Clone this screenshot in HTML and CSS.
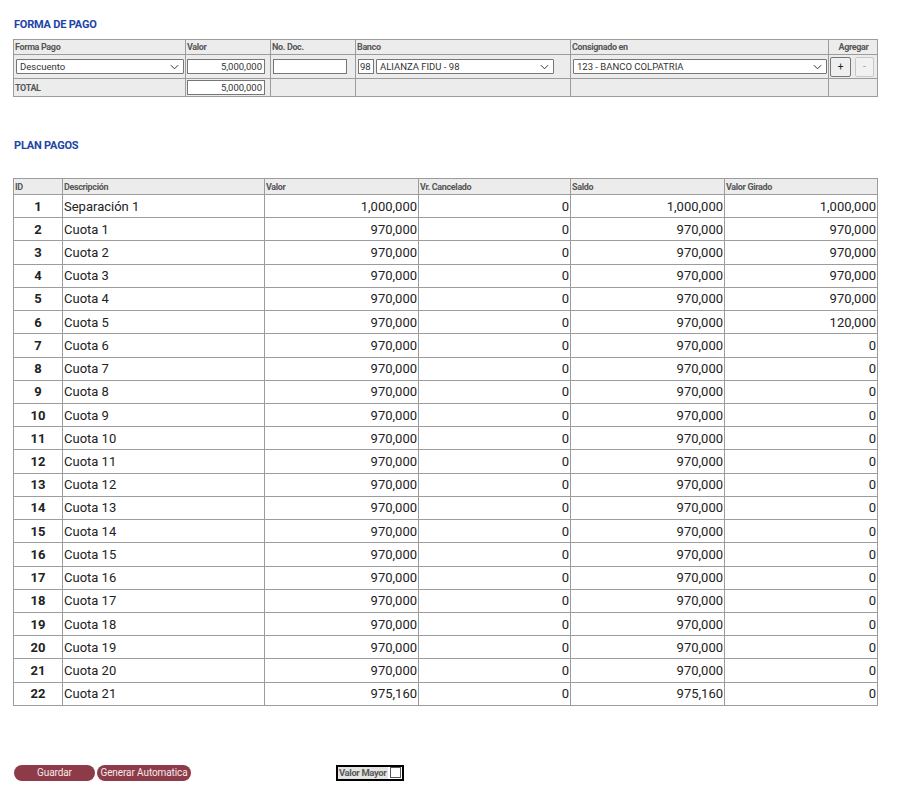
FILE: index.html
```html
<!DOCTYPE html>
<html lang="es">
<head>
<meta charset="utf-8">
<title>Forma de pago</title>
<link rel="stylesheet" href="styles.css">
</head>
<body>
<div class="page">
  <h2 class="title t1">FORMA DE PAGO</h2>
  <table class="pago">
    <colgroup>
      <col style="width:172px"><col style="width:85px"><col style="width:85px"><col style="width:215px"><col style="width:258px"><col style="width:49px">
    </colgroup>
    <tr class="hd">
      <th>Forma Pago</th><th>Valor</th><th>No. Doc.</th><th>Banco</th><th>Consignado en</th><th class="c">Agregar</th>
    </tr>
    <tr class="inrow">
      <td><div class="sel w-forma"><span>Descuento</span><svg viewBox="0 0 10 6" class="chev"><path d="M1 1 L5 5 L9 1" fill="none" stroke="#333" stroke-width="1.1"/></svg></div></td>
      <td><div class="inp num w-valor">5,000,000</div></td>
      <td><div class="inp w-doc"></div></td>
      <td><div class="banco"><div class="inp w-cod">98</div><div class="sel w-banco"><span>ALIANZA FIDU - 98</span><svg viewBox="0 0 10 6" class="chev"><path d="M1 1 L5 5 L9 1" fill="none" stroke="#333" stroke-width="1.1"/></svg></div></div></td>
      <td><div class="sel w-cons"><span>123 - BANCO COLPATRIA</span><svg viewBox="0 0 10 6" class="chev"><path d="M1 1 L5 5 L9 1" fill="none" stroke="#333" stroke-width="1.1"/></svg></div></td>
      <td><div class="btns"><span class="pm">+</span><span class="pm dis">-</span></div></td>
    </tr>
    <tr class="tot">
      <th>TOTAL</th>
      <td><div class="inp num w-valor">5,000,000</div></td>
      <td></td><td></td><td></td><td></td>
    </tr>
  </table>

  <h2 class="title t2">PLAN PAGOS</h2>
  <table class="plan">
    <colgroup>
      <col style="width:49px"><col style="width:202px"><col style="width:154px"><col style="width:152px"><col style="width:154px"><col style="width:153px">
    </colgroup>
    <thead>
      <tr><th>ID</th><th>Descripción</th><th>Valor</th><th>Vr. Cancelado</th><th>Saldo</th><th>Valor Girado</th></tr>
    </thead>
    <tbody>
      <tr><td class="id">1</td><td>Separación 1</td><td class="n">1,000,000</td><td class="n">0</td><td class="n">1,000,000</td><td class="n">1,000,000</td></tr>
      <tr><td class="id">2</td><td>Cuota 1</td><td class="n">970,000</td><td class="n">0</td><td class="n">970,000</td><td class="n">970,000</td></tr>
      <tr><td class="id">3</td><td>Cuota 2</td><td class="n">970,000</td><td class="n">0</td><td class="n">970,000</td><td class="n">970,000</td></tr>
      <tr><td class="id">4</td><td>Cuota 3</td><td class="n">970,000</td><td class="n">0</td><td class="n">970,000</td><td class="n">970,000</td></tr>
      <tr><td class="id">5</td><td>Cuota 4</td><td class="n">970,000</td><td class="n">0</td><td class="n">970,000</td><td class="n">970,000</td></tr>
      <tr><td class="id">6</td><td>Cuota 5</td><td class="n">970,000</td><td class="n">0</td><td class="n">970,000</td><td class="n">120,000</td></tr>
      <tr><td class="id">7</td><td>Cuota 6</td><td class="n">970,000</td><td class="n">0</td><td class="n">970,000</td><td class="n">0</td></tr>
      <tr><td class="id">8</td><td>Cuota 7</td><td class="n">970,000</td><td class="n">0</td><td class="n">970,000</td><td class="n">0</td></tr>
      <tr><td class="id">9</td><td>Cuota 8</td><td class="n">970,000</td><td class="n">0</td><td class="n">970,000</td><td class="n">0</td></tr>
      <tr><td class="id">10</td><td>Cuota 9</td><td class="n">970,000</td><td class="n">0</td><td class="n">970,000</td><td class="n">0</td></tr>
      <tr><td class="id">11</td><td>Cuota 10</td><td class="n">970,000</td><td class="n">0</td><td class="n">970,000</td><td class="n">0</td></tr>
      <tr><td class="id">12</td><td>Cuota 11</td><td class="n">970,000</td><td class="n">0</td><td class="n">970,000</td><td class="n">0</td></tr>
      <tr><td class="id">13</td><td>Cuota 12</td><td class="n">970,000</td><td class="n">0</td><td class="n">970,000</td><td class="n">0</td></tr>
      <tr><td class="id">14</td><td>Cuota 13</td><td class="n">970,000</td><td class="n">0</td><td class="n">970,000</td><td class="n">0</td></tr>
      <tr><td class="id">15</td><td>Cuota 14</td><td class="n">970,000</td><td class="n">0</td><td class="n">970,000</td><td class="n">0</td></tr>
      <tr><td class="id">16</td><td>Cuota 15</td><td class="n">970,000</td><td class="n">0</td><td class="n">970,000</td><td class="n">0</td></tr>
      <tr><td class="id">17</td><td>Cuota 16</td><td class="n">970,000</td><td class="n">0</td><td class="n">970,000</td><td class="n">0</td></tr>
      <tr><td class="id">18</td><td>Cuota 17</td><td class="n">970,000</td><td class="n">0</td><td class="n">970,000</td><td class="n">0</td></tr>
      <tr><td class="id">19</td><td>Cuota 18</td><td class="n">970,000</td><td class="n">0</td><td class="n">970,000</td><td class="n">0</td></tr>
      <tr><td class="id">20</td><td>Cuota 19</td><td class="n">970,000</td><td class="n">0</td><td class="n">970,000</td><td class="n">0</td></tr>
      <tr><td class="id">21</td><td>Cuota 20</td><td class="n">970,000</td><td class="n">0</td><td class="n">970,000</td><td class="n">0</td></tr>
      <tr><td class="id">22</td><td>Cuota 21</td><td class="n">975,160</td><td class="n">0</td><td class="n">975,160</td><td class="n">0</td></tr>
    </tbody>
  </table>

  <div class="actions">
    <span class="btn b-guardar">Guardar</span>
    <span class="btn b-gen">Generar Automatica</span>
    <span class="vmayor"><span class="vm-label">Valor Mayor</span><span class="chk"></span></span>
  </div>
</div>
</body>
</html>
```

FILE: styles.css
```css
html, body {
  margin: 0;
  padding: 0;
  background: #ffffff;
}
body {
  font-family: Roboto, "Liberation Sans", Arial, sans-serif;
  color: #222;
}
.page {
  padding-left: 13px;
  padding-top: 18px;
  width: 865px;
}
.title {
  margin: 0;
  font-size: 11px;
  font-weight: 700;
  color: #1c44a6;
  letter-spacing: -0.2px;
  line-height: 14px;
  padding-left: 1px;
}
.t1 { margin-bottom: 7px; }
.t2 { margin-top: 42px; margin-bottom: 25px; }

table {
  border-collapse: collapse;
  table-layout: fixed;
  width: 865px;
}
.pago th, .pago td, .plan th, .plan td {
  border: 1px solid #9c9c9c;
  padding: 0;
}
.pago th, .plan th {
  background: #ececec;
  color: #575757;
  font-size: 9px;
  font-weight: 700;
  text-align: left;
  letter-spacing: -0.35px;
  padding-left: 1px;
  vertical-align: middle;
}
.pago .hd th { height: 14px; }
.pago th.c { text-align: center; }
.pago .inrow td { background: #ececec; height: 23px; vertical-align: middle; }
.pago .tot th, .pago .tot td { background: #ececec; height: 17px; vertical-align: middle; }

.sel, .inp {
  box-sizing: border-box;
  height: 15px;
  border: 1px solid #767676;
  background: #fff;
  font-size: 9.5px;
  color: #333;
  display: flex;
  align-items: center;
  padding: 0 3px;
  line-height: 13px;
  white-space: nowrap;
  overflow: hidden;
}
.sel { justify-content: space-between; border-radius: 1px; }
.chev { width: 9px; height: 6px; flex: none; margin-right: 1px; }
.num { justify-content: flex-end; padding-right: 2px; }
.w-forma { width: 168px; margin-left: 2px; }
.w-valor { width: 78px; margin-left: 1px; }
.w-doc { width: 74px; margin-left: 2px; }
.banco { display: flex; gap: 2px; margin-left: 2px; }
.w-cod { width: 16px; padding: 0 1px; }
.w-banco { width: 178px; }
.w-cons { width: 254px; margin-left: 2px; }
.btns { display: flex; gap: 4px; margin-left: 1px; }
.pm {
  box-sizing: border-box;
  width: 21px;
  height: 20px;
  border: 1px solid #767676;
  background: #efefef;
  border-radius: 2px;
  font-size: 10px;
  display: flex;
  align-items: center;
  justify-content: center;
  color: #222;
}
.pm.dis {
  width: 19px;
  border-color: #c8c8c8;
  background: #f1f1f1;
  color: #999;
}

.plan thead th { height: 15px; }
.plan td {
  height: 22.22px;
  font-size: 13px;
  color: #222;
  padding: 0 1px;
  vertical-align: middle;
  line-height: 15px;
}
.plan td.id { text-align: center; font-weight: 700; }
.plan td.n { text-align: right; }

.actions {
  margin-top: 59px;
  display: flex;
  align-items: center;
  padding-left: 1px;
}
.btn {
  height: 16px;
  box-sizing: border-box;
  background: #8d3b48;
  color: #f4e9ea;
  font-size: 10px;
  line-height: 16px;
  border-radius: 8px;
  text-align: center;
  letter-spacing: -0.1px;
}
.b-guardar { width: 81px; }
.b-gen { width: 94px; margin-left: 2px; }
.vmayor {
  margin-left: 145px;
  display: flex;
  align-items: center;
  border: 2px solid #000;
  height: 16px;
  box-sizing: border-box;
  background: #fff;
}
.vm-label {
  background: #e4e4e4;
  color: #5a5a5a;
  font-size: 9.5px;
  font-weight: 700;
  letter-spacing: -0.4px;
  line-height: 12px;
  padding: 0 2px 0 1px;
}
.chk {
  box-sizing: border-box;
  width: 11px;
  height: 11px;
  border: 1px solid #555;
  background: #fff;
  margin: 0 1px 0 2px;
}
```
